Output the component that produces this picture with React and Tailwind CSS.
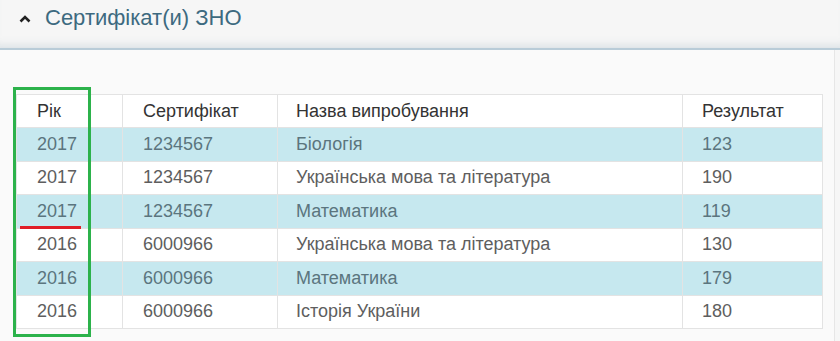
import React from "react";

const rows = [
  { year: "2017", cert: "1234567", name: "Біологія", result: "123" },
  { year: "2017", cert: "1234567", name: "Українська мова та література", result: "190" },
  { year: "2017", cert: "1234567", name: "Математика", result: "119" },
  { year: "2016", cert: "6000966", name: "Українська мова та література", result: "130" },
  { year: "2016", cert: "6000966", name: "Математика", result: "179" },
  { year: "2016", cert: "6000966", name: "Історія України", result: "180" },
];

const App = () => {
  return (
    <div className="relative w-[840px] h-[341px] bg-[#f6f6f6] overflow-hidden font-['Liberation_Sans',Arial,sans-serif]">
      {/* заголовок секції */}
      <div className="h-[50px] flex items-start gap-[14px] pl-[19px] pt-[4px] border-b-2 border-[#b9ccd8] shadow-[inset_0_-10px_10px_-8px_rgba(120,150,170,0.25)]">
        <svg width="12" height="8" viewBox="0 0 12 8" className="mt-[11px]">
          <path d="M1.5 6.5 L6 2 L10.5 6.5" fill="none" stroke="#222" strokeWidth="2.6" />
        </svg>
        <span className="text-[22px] text-[#3d6a80] leading-[28px]">Сертифікат(и) ЗНО</span>
      </div>

      <div className="w-[835px] h-[291px] bg-[#fafafa] border-r border-[#e6e6e6] pl-[16px] pt-[44px]">
        <table className="w-[806px] border-collapse text-[18px] table-fixed">
          <colgroup>
            <col className="w-[106px]" />
            <col className="w-[155px]" />
            <col className="w-[405px]" />
            <col className="w-[140px]" />
          </colgroup>
          <thead>
            <tr className="h-[33px] bg-white text-[#333]">
              <th className="border border-[#e3e3e3] font-normal text-left pl-[20px]">Рік</th>
              <th className="border border-[#e3e3e3] font-normal text-left pl-[20px]">Сертифікат</th>
              <th className="border border-[#e3e3e3] font-normal text-left pl-[18px]">Назва випробування</th>
              <th className="border border-[#e3e3e3] font-normal text-left pl-[19px]">Результат</th>
            </tr>
          </thead>
          <tbody>
            {rows.map((row, index) => (
              <tr
                key={index}
                className={`h-[33.5px] ${index % 2 === 0 ? "bg-[#c6e8ef] text-[#5b757e]" : "bg-white text-[#5e5e5e]"}`}
              >
                <td className="border border-[#e3e3e3] pl-[20px]">{row.year}</td>
                <td className="border border-[#e3e3e3] pl-[20px]">{row.cert}</td>
                <td className="border border-[#e3e3e3] pl-[18px]">{row.name}</td>
                <td className="border border-[#e3e3e3] pl-[19px]">{row.result}</td>
              </tr>
            ))}
          </tbody>
        </table>
      </div>

      {/* позначки поверх таблиці */}
      <div className="absolute left-[13px] top-[87px] w-[78px] h-[250px] border-[3px] border-[#2cb24b]" />
      <div className="absolute left-[20px] top-[226px] w-[61px] h-[3px] bg-[#e01e28]" />
    </div>
  );
};

export default App;
